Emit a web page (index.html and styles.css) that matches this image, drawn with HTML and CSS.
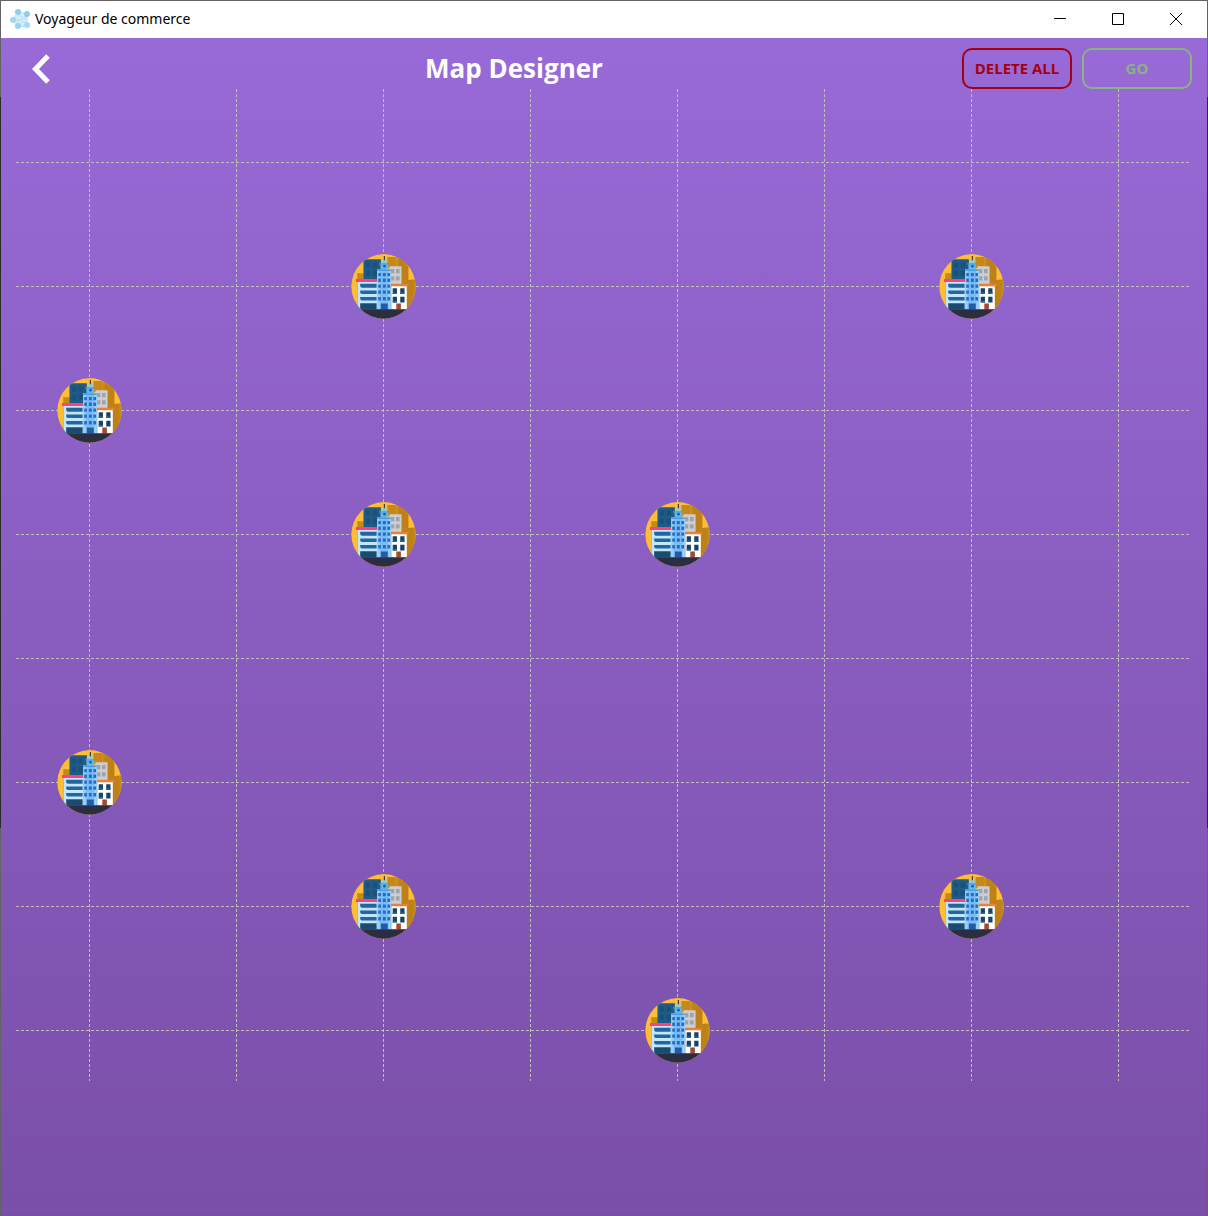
FILE: index.html
```html
<!DOCTYPE html>
<html lang="fr">
<head>
<meta charset="utf-8">
<meta name="viewport" content="width=device-width, initial-scale=1">
<title>Voyageur de commerce</title>
<link rel="stylesheet" href="styles.css">
</head>
<body>
<svg width="0" height="0" class="defs" aria-hidden="true">
  <defs>
    <clipPath id="disc"><circle cx="116" cy="116" r="98"/></clipPath>
    <symbol id="city" viewBox="17 17 198 198">
      <g clip-path="url(#disc)">
        <rect x="17" y="17" width="198" height="198" fill="#fdbd34"/>
        <path d="M36 96V76h20v34h100V27h31v22h7v46h22v90H36z" fill="#c5881b"/>
        <path d="M108 17h48v16h-48z" fill="#fdbd34"/>
        <path d="M128 26h28v34h-28z" fill="#c5881b"/>
        <path d="M187 50v46h11V50z" fill="#fdbd34"/>
        <path d="M163 27h24v24h5v45h14v90h-43z" fill="#bd8118"/>
        <path d="M55 33h53v65H55z" fill="#1f5b88"/>
        <path d="M62 44h13v14H62zM83 44h13v14H83zM62 68h13v15H62zM83 68h13v15H83z" fill="#1b5079"/>
        <path d="M134 54h37v56h-37z" fill="#ccced1"/>
        <path d="M139 63h10v13h-10zM154 63h11v13h-11zM139 85h10v13h-10zM154 85h11v13h-11z" fill="#9fa4a9"/>
        <path d="M37 102h62v84H37z" fill="#c2e7fb"/>
        <path d="M32 93h65v9H32z" fill="#f9437c"/>
        <path d="M45 108h50v12H49l-4-4zM45 128h50v11H49l-4-4zM45 148h50v11H49l-4-4z" fill="#2265a0"/>
        <path d="M45 167h50v19H45z" fill="#1b4b73"/>
        <path d="M140 112h47v74h-47z" fill="#fff"/>
        <path d="M137 108h55v7h-55z" fill="#ee7e35"/>
        <path d="M144 121h13v18h-13zM167 121h13v18h-13zM144 147h13v18h-13zM167 147h13v18h-13z" fill="#174466"/>
        <path d="M144 134h13v5h-13zM167 134h13v5h-13zM144 160h13v5h-13z" fill="#286b85"/>
        <path d="M155 168h14v18h-14z" fill="#a6482e"/>
        <path d="M97 64h41v122H97z" fill="#78bdf6"/>
        <path d="M97 64h7v122h-7zM131 64h7v122h-7z" fill="#9ad3fb"/>
        <path d="M107 47h23v18h-23z" fill="#64b5ee"/>
        <path d="M112 36h14v10h-14z" fill="#83cdf5"/>
        <path d="M103 45h30v4h-30zM97 64h41v5H97z" fill="#4b9ee0"/>
        <path d="M117 23h3v13h-3z" fill="#172238"/>
        <circle cx="119" cy="54" r="4" fill="#185fa9"/>
        <path d="M100 75h8v10h-8zM114 75h9v10h-9zM128 75h8v10h-8zM100 92h8v10h-8zM114 92h9v10h-9zM128 92h8v10h-8zM100 110h8v10h-8zM114 110h9v10h-9zM128 110h8v10h-8zM100 128h8v10h-8zM114 128h9v10h-9zM128 128h8v10h-8zM100 148h8v11h-8zM114 148h9v11h-9zM128 148h8v11h-8z" fill="#2869c4"/>
        <path d="M108 168h21v18h-21z" fill="#245ba8"/>
        <path d="M17 185h198v30H17z" fill="#2b2e42"/>
      </g>
    </symbol>
  </defs>
</svg>

<div class="window">
  <header class="titlebar">
    <svg class="app-icon" width="20" height="20" viewBox="0 0 20 20" aria-hidden="true">
      <path d="M8 3L18 5V17L7 18L2 11z" fill="#d3edf8"/>
      <path d="M8 3L18 5L13 12L18 17L7 18L9 11L2 11L8 3L13 12L7 18M9 11L18 5" fill="none" stroke="#b9e0ee"/>
      <circle cx="8" cy="3" r="3" fill="#91cdf2"/>
      <circle cx="17" cy="5" r="3" fill="#8ccbf3"/>
      <circle cx="3" cy="11" r="3" fill="#a2d6f1"/>
      <circle cx="8" cy="17" r="3" fill="#98d3f3"/>
      <circle cx="17" cy="16" r="3" fill="#a3daf4"/>
      <path d="M10 8h1v1h-1zM13 11h1v1h-1zM9 13h1v1H9zM12 6h1v1h-1z" fill="#fff"/>
    </svg>
    <span class="app-name">Voyageur de commerce</span>
    <div class="controls">
      <button class="control" type="button" aria-label="Réduire"><svg width="12" height="12" viewBox="0 0 12 12"><path d="M0 5.500H12"/></svg></button>
      <button class="control" type="button" aria-label="Agrandir"><svg width="12" height="12" viewBox="0 0 12 12"><path d="M.5.500h11v11H.5z"/></svg></button>
      <button class="control" type="button" aria-label="Fermer"><svg width="12" height="12" viewBox="0 0 12 12"><path d="M0 0L12 12M12 0L0 12"/></svg></button>
    </div>
  </header>

  <main class="designer">
    <div class="toolbar">
      <button class="back" type="button" aria-label="Retour"><svg width="20" height="30" viewBox="0 0 20 30"><path d="M17 2L4.500 15L17 28"/></svg></button>
      <h1 class="title">Map Designer</h1>
      <button class="action delete" type="button">DELETE ALL</button>
      <button class="action go" type="button">GO</button>
    </div>

    <div class="map">
      <svg class="grid" width="100%" height="992" aria-hidden="true">
        <line x1="6.25%" x2="6.25%" y1="0" y2="992"/>
        <line x1="18.75%" x2="18.75%" y1="0" y2="992"/>
        <line x1="31.25%" x2="31.25%" y1="0" y2="992"/>
        <line x1="43.75%" x2="43.75%" y1="0" y2="992"/>
        <line x1="56.25%" x2="56.25%" y1="0" y2="992"/>
        <line x1="68.75%" x2="68.75%" y1="0" y2="992"/>
        <line x1="81.25%" x2="81.25%" y1="0" y2="992"/>
        <line x1="93.75%" x2="93.75%" y1="0" y2="992"/>
        <line x1="0" x2="99.8%" y1="73.5" y2="73.5"/>
        <line x1="0" x2="99.8%" y1="197.5" y2="197.5"/>
        <line x1="0" x2="99.8%" y1="321.5" y2="321.5"/>
        <line x1="0" x2="99.8%" y1="445.5" y2="445.5"/>
        <line x1="0" x2="99.8%" y1="569.5" y2="569.5"/>
        <line x1="0" x2="99.8%" y1="693.5" y2="693.5"/>
        <line x1="0" x2="99.8%" y1="817.5" y2="817.5"/>
        <line x1="0" x2="99.8%" y1="941.5" y2="941.5"/>
      </svg>
      <button class="pin col-3 row-2" type="button" aria-label="Ville 1"><svg width="65" height="65"><use href="#city"/></svg></button>
      <button class="pin col-7 row-2" type="button" aria-label="Ville 2"><svg width="65" height="65"><use href="#city"/></svg></button>
      <button class="pin col-1 row-3" type="button" aria-label="Ville 3"><svg width="65" height="65"><use href="#city"/></svg></button>
      <button class="pin col-3 row-4" type="button" aria-label="Ville 4"><svg width="65" height="65"><use href="#city"/></svg></button>
      <button class="pin col-5 row-4" type="button" aria-label="Ville 5"><svg width="65" height="65"><use href="#city"/></svg></button>
      <button class="pin col-1 row-6" type="button" aria-label="Ville 6"><svg width="65" height="65"><use href="#city"/></svg></button>
      <button class="pin col-3 row-7" type="button" aria-label="Ville 7"><svg width="65" height="65"><use href="#city"/></svg></button>
      <button class="pin col-7 row-7" type="button" aria-label="Ville 8"><svg width="65" height="65"><use href="#city"/></svg></button>
      <button class="pin col-5 row-8" type="button" aria-label="Ville 9"><svg width="65" height="65"><use href="#city"/></svg></button>
    </div>
  </main>
</div>
</body>
</html>
```
FILE: styles.css
```css
* { box-sizing: border-box; }

body {
  margin: 0;
  padding: 1px;
  min-height: 100vh;
  display: flex;
  flex-direction: column;
  background: linear-gradient(#636363 97px, #2b2b2b 97px, #2b2b2b 828px, #636363 828px);
  font-family: "Open Sans", "Noto Sans", sans-serif;
}

button {
  margin: 0;
  padding: 0;
  border: 0;
  background: none;
  font: inherit;
  cursor: pointer;
}

svg { display: block; }
.defs { position: absolute; }

.window {
  flex: 1;
  display: flex;
  flex-direction: column;
}

.titlebar {
  display: flex;
  align-items: center;
  height: 37px;
  padding: 0 2px 1px 9px;
  gap: 5px;
  background: #fff;
  color: #000;
}

.app-name {
  font-family: "Noto Sans", "Open Sans", sans-serif;
  font-size: 14px;
  line-height: 20px;
}

.controls {
  display: flex;
  align-self: stretch;
  margin-left: auto;
}

.control {
  display: flex;
  align-items: center;
  justify-content: center;
  width: 58px;
}

.control svg {
  fill: none;
  stroke: #000;
}

.designer {
  flex: 1;
  padding: 10px 15px;
  background: linear-gradient(#986ad7, #7a4fa8);
}

.toolbar {
  display: flex;
  align-items: center;
  gap: 10px;
  height: 41px;
}

.back {
  display: flex;
  align-items: center;
  justify-content: center;
  width: 50px;
  height: 41px;
}

.back svg {
  fill: none;
  stroke: #fff;
  stroke-width: 5;
}

.title {
  flex: 1;
  margin: 0;
  padding-bottom: 2px;
  color: #fff;
  font-size: 26px;
  font-weight: 700;
  line-height: 36px;
  text-align: center;
}

.action {
  width: 110px;
  height: 41px;
  padding-bottom: 2px;
  border: 2px solid;
  border-radius: 10px;
  font-size: 15px;
  font-weight: 700;
  line-height: 20px;
}

.delete { color: #a30010; }
.go { color: #88b480; }

.map {
  position: relative;
}

.grid line {
  stroke: #c3bfb5;
  stroke-width: 1;
  stroke-dasharray: 3 2;
}

/* Cities sit on the crossings of the grid lines. */
.pin {
  position: absolute;
  width: 65px;
  height: 65px;
  margin: -33px 0 0 -33px;
  border-radius: 50%;
}

.col-1 { left: 6.25%; }
.col-3 { left: 31.25%; }
.col-5 { left: 56.25%; }
.col-7 { left: 81.25%; }

.row-2 { top: 198px; }
.row-3 { top: 322px; }
.row-4 { top: 446px; }
.row-6 { top: 694px; }
.row-7 { top: 818px; }
.row-8 { top: 942px; }
```
